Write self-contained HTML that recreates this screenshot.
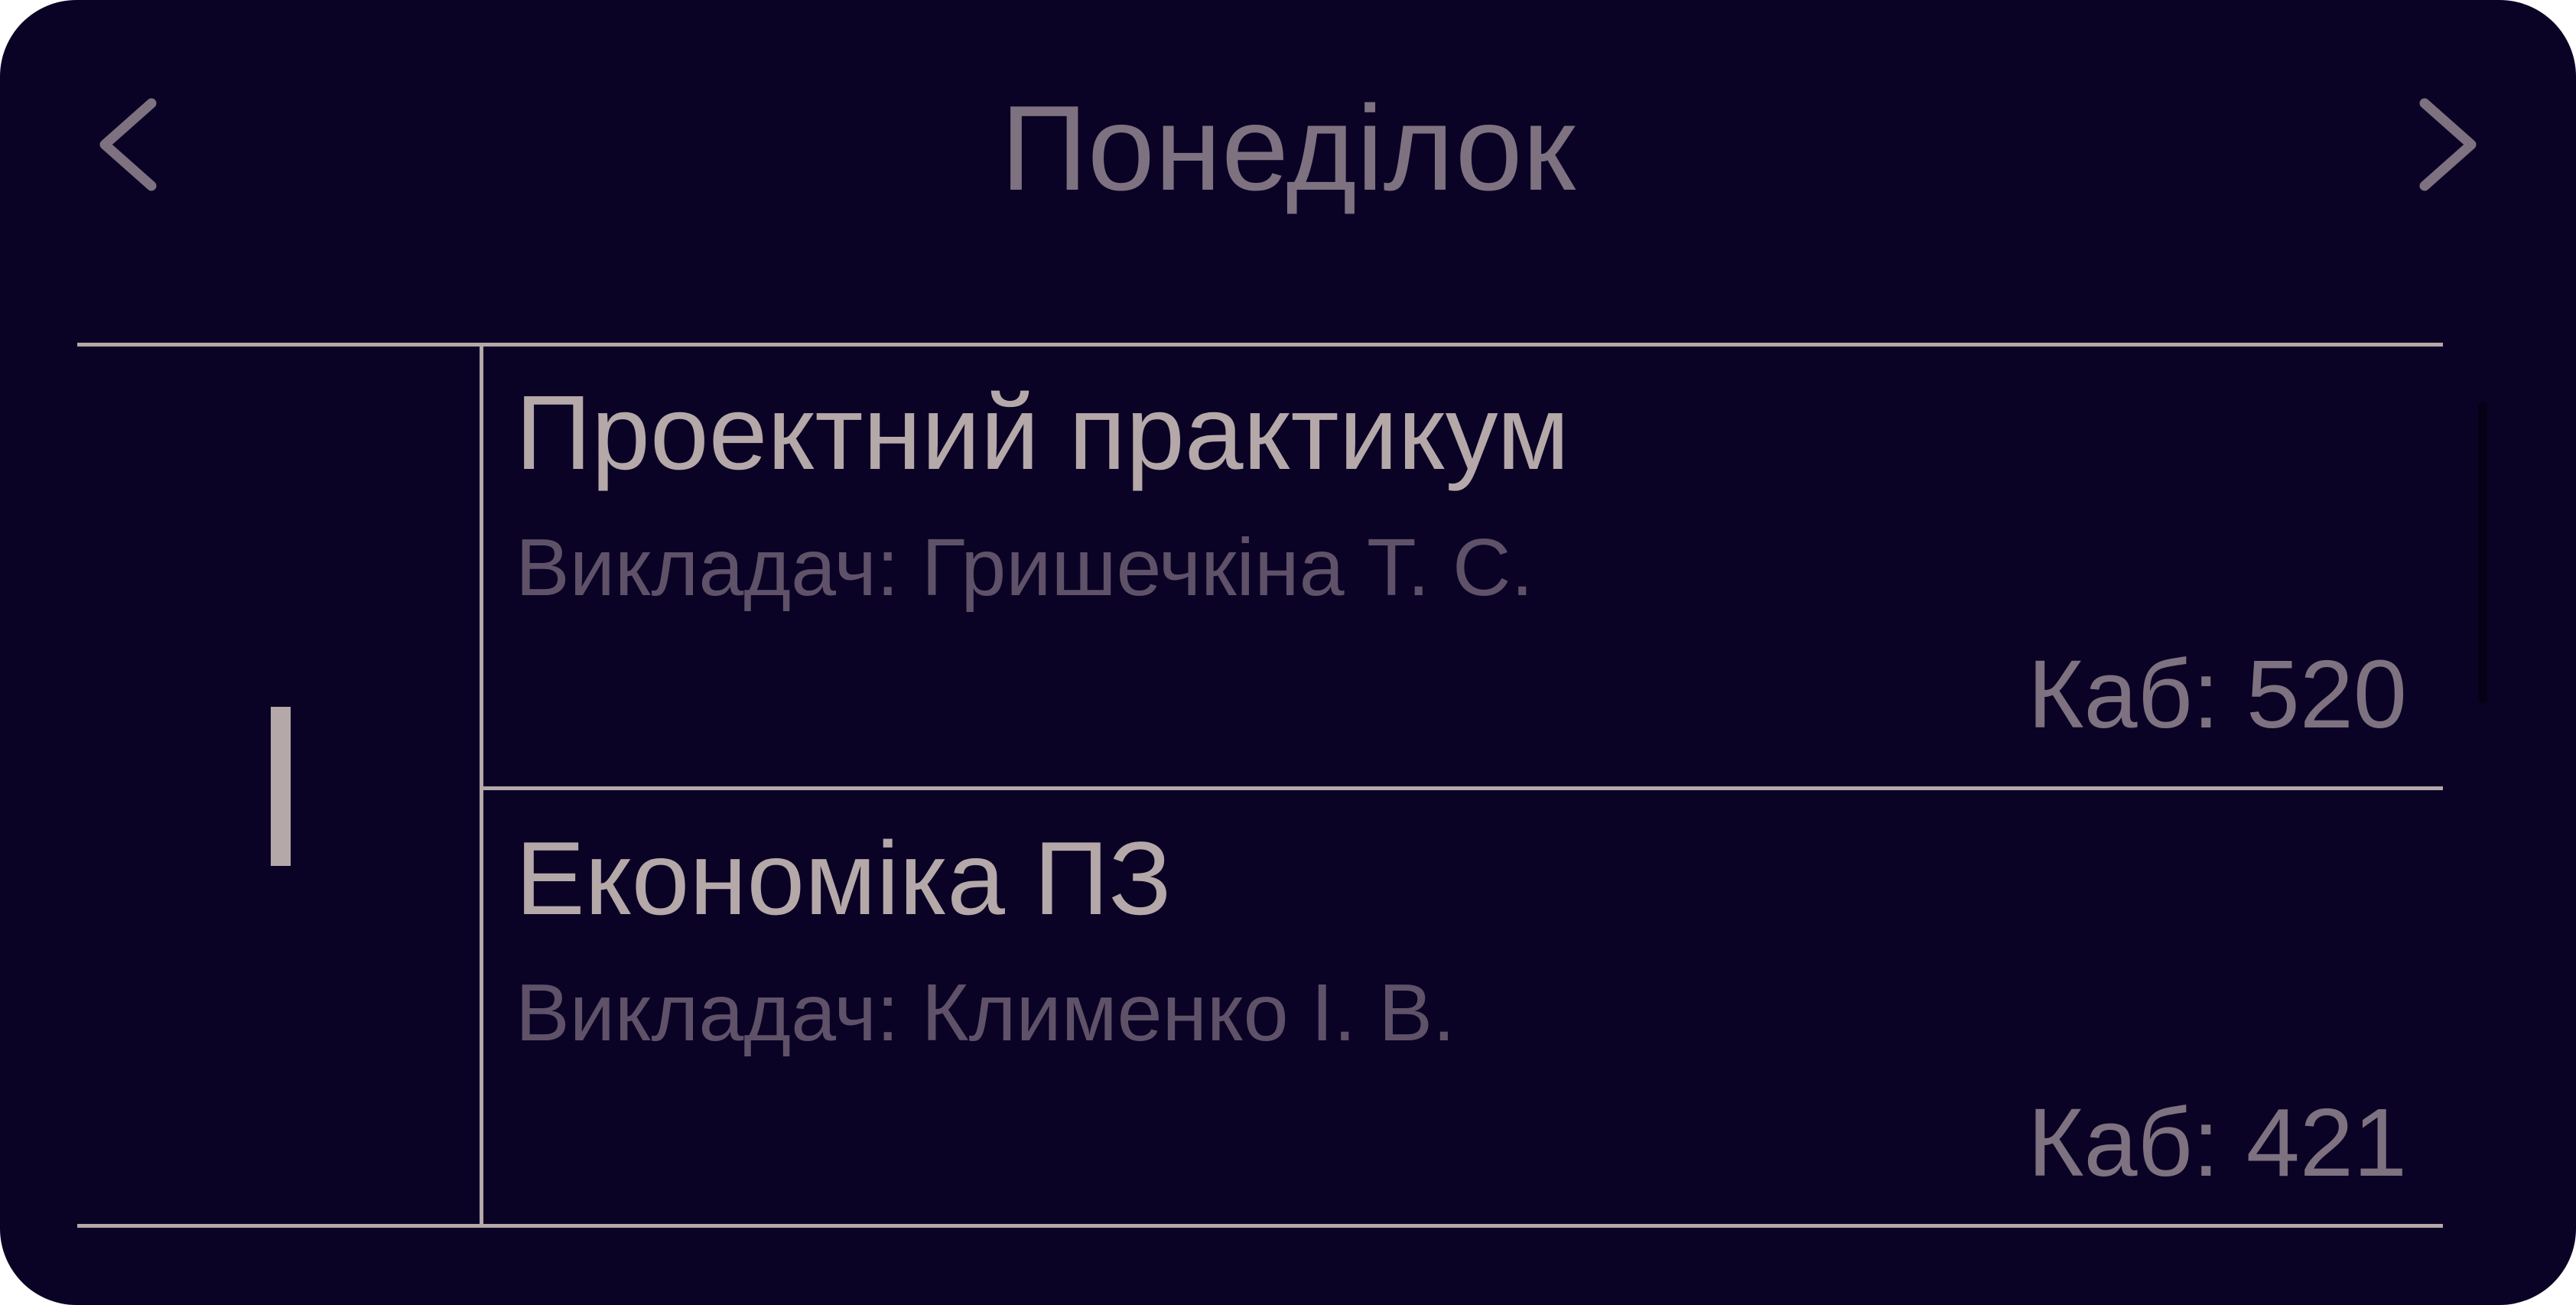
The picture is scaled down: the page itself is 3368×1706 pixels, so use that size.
<!DOCTYPE html>
<html><head><meta charset="utf-8"><style>
html,body{margin:0;padding:0;background:#fff;}
#c{position:relative;width:3368px;height:1706px;background:#0a0326;border-radius:100px;overflow:hidden;font-family:"Liberation Sans","DejaVu Sans",sans-serif;}
.t{position:absolute;white-space:nowrap;line-height:1;}
.h{position:absolute;background:#b5a8a8;}
</style></head><body>
<div id="c">
<svg style="position:absolute;left:0;top:0" width="3368" height="300">
<polyline points="198,135 137,189 198,243" fill="none" stroke="#7f7280" stroke-width="13" stroke-linecap="round" stroke-linejoin="round"/>
<polyline points="3170,135 3231,189 3170,243" fill="none" stroke="#7f7280" stroke-width="13" stroke-linecap="round" stroke-linejoin="round"/>
</svg>
<div class="t" style="left:0;width:3368px;text-align:center;top:115px;font-size:158px;color:#7f7280;">Понеділок</div>
<div class="h" style="left:101px;top:448px;width:3093px;height:5px"></div>
<div class="h" style="left:627px;top:451px;width:5px;height:1153px"></div>
<div class="h" style="left:629px;top:1028px;width:2565px;height:5px"></div>
<div class="h" style="left:101px;top:1600px;width:3093px;height:5px"></div>
<div style="position:absolute;left:354px;top:924px;width:26px;height:208px;background:#b5a8a8"></div>
<div style="position:absolute;left:3240px;top:526px;width:12px;height:394px;background:#050216;border-radius:6px"></div>
<div class="t" style="left:674px;top:497px;font-size:138px;color:#b5a8a8;">Проектний практикум</div>
<div class="t" style="left:674px;top:689px;font-size:106px;color:#5f5268;">Викладач: Гришечкіна Т. С.</div>
<div class="t" style="right:221px;top:845px;font-size:126px;color:#7f7280;">Каб: 520</div>
<div class="t" style="left:674px;top:1080px;font-size:136px;color:#b5a8a8;">Економіка ПЗ</div>
<div class="t" style="left:674px;top:1271px;font-size:106px;color:#5f5268;">Викладач: Клименко І. В.</div>
<div class="t" style="right:221px;top:1431px;font-size:126px;color:#7f7280;">Каб: 421</div>
</div>
</body></html>
